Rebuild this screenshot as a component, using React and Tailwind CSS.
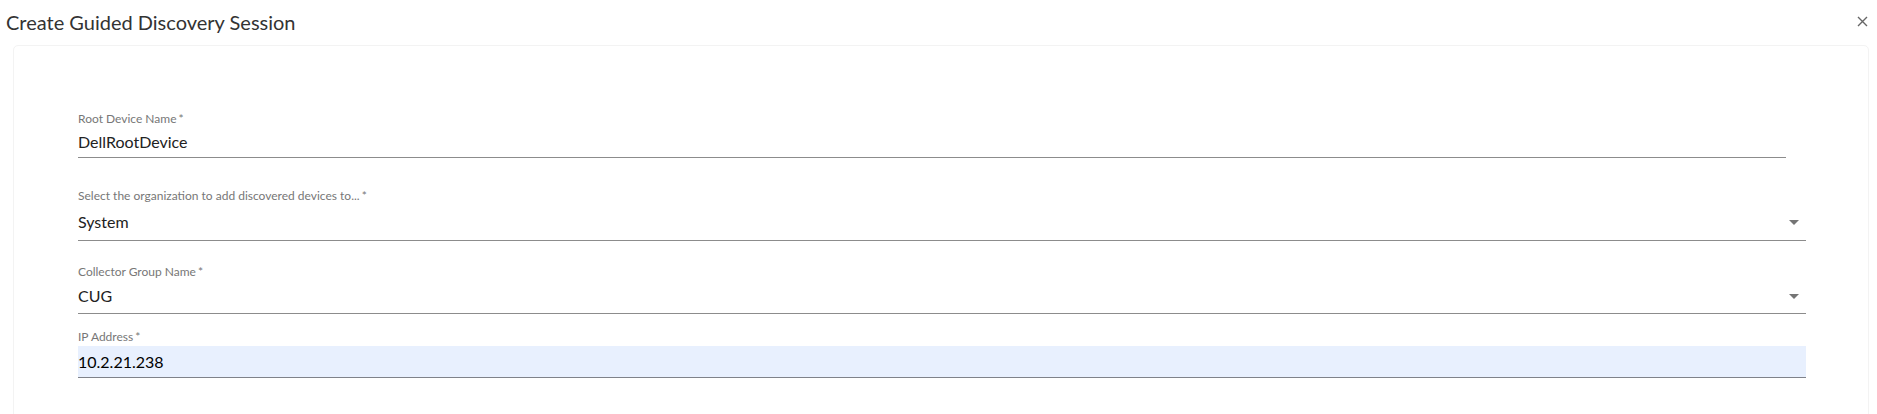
export default function App() {
  return (
    <div
      className="h-[414px] overflow-hidden bg-white text-[#222]"
      style={{ fontFamily: "Lato, 'Noto Sans', sans-serif" }}
    >
      <div className="flex h-[43px] items-center justify-between pl-[6px] pr-[8px]">
        <h1 className="text-[20px] leading-[24px] text-[#333]">
          Create Guided Discovery Session
        </h1>
        <button className="flex h-[14px] w-[14px] items-center justify-center text-[#666]">
          <svg width="11" height="11" viewBox="0 0 11 11" fill="none">
            <path d="M1 1L10 10M10 1L1 10" stroke="currentColor" strokeWidth="1.4" />
          </svg>
        </button>
      </div>

      <div className="ml-[13px] mr-[8px] mt-[2px] h-[400px] rounded-[5px] border border-[#f3f3f3] bg-white pl-[64px] pr-[62px] pt-[67px]">
        <div className="mr-[20px] border-b border-[#8c8c8c] pb-[3px]">
          <label className="block text-[12px] leading-[12px] text-[#777]">
            Root Device Name<span className="ml-[2px]">*</span>
          </label>
          <div className="mt-[5px] text-[16px] leading-[24px]">DellRootDevice</div>
        </div>

        <div className="mt-[32px] border-b border-[#8c8c8c] pb-[6px]">
          <label className="block text-[12px] leading-[12px] text-[#777]">
            Select the organization to add discovered devices to...
            <span className="ml-[2px]">*</span>
          </label>
          <div className="mt-[8px] flex h-[24px] items-center justify-between pr-[7px]">
            <span className="text-[16px] leading-[24px]">System</span>
            <Arrow />
          </div>
        </div>

        <div className="mt-[25px] border-b border-[#8c8c8c] pb-[5px]">
          <label className="block text-[12px] leading-[12px] text-[#777]">
            Collector Group Name<span className="ml-[2px]">*</span>
          </label>
          <div className="mt-[6px] flex h-[24px] items-center justify-between pr-[7px]">
            <span className="text-[16px] leading-[24px]">CUG</span>
            <Arrow />
          </div>
        </div>

        <div className="mt-[17px]">
          <label className="block text-[12px] leading-[12px] text-[#777]">
            IP Address<span className="ml-[2px]">*</span>
          </label>
          <div className="mt-[3px] flex h-[32px] items-center border-b border-[#7f828a] bg-[#e8f0fe] pt-[1px] text-[16px] leading-[24px] text-black">
            10.2.21.238
          </div>
        </div>
      </div>
    </div>
  );
}

function Arrow() {
  return (
    <svg width="10" height="5" viewBox="0 0 10 5" className="text-[#757575]">
      <path d="M0 0H10L5 5Z" fill="currentColor" />
    </svg>
  );
}
